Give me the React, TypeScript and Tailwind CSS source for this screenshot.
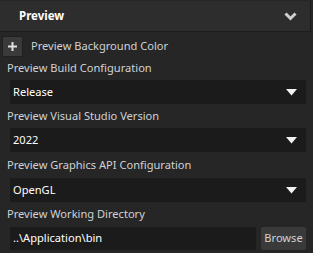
import React from "react";

const font = { fontFamily: '"Noto Sans", "Open Sans", sans-serif' };

function Tri() {
  return (
    <svg width="11" height="7" viewBox="0 0 11 7" className="shrink-0">
      <path d="M0 0 H11 L5.5 6.5 Z" fill="#f2f2f2" />
    </svg>
  );
}

function Select({ value }: { value: string }) {
  return (
    <div className="ml-[10px] mr-[7px] h-[24px] bg-[#1b1b1b] flex items-center justify-between pl-[3px] pr-[9px] text-[11.1px] text-white">
      <span>{value}</span>
      <Tri />
    </div>
  );
}

function Label({ text, h }: { text: string; h: string }) {
  return <div className={`pl-[7px] flex items-center text-[11.1px] text-[#cfd2d6] ${h}`}>{text}</div>;
}

export default function App() {
  return (
    <div className="w-[313px] h-[253px] bg-[#262626] overflow-hidden" style={font}>
      <div className="mt-[1px] mr-[2px] h-[31px] bg-[#2d2d2d] border-b border-r border-[#1c1c1c] flex items-center justify-between pl-[19px] pr-[13px]">
        <span className="text-[11.5px] font-bold text-white">Preview</span>
        <svg width="13" height="9" viewBox="0 0 13 9">
          <path d="M1.5 1.5 L6.5 6.5 L11.5 1.5" stroke="#cfcfcf" strokeWidth="3" fill="none" />
        </svg>
      </div>
      <div className="flex items-start h-[25px] pt-[4px] pl-[2px]">
        <div className="w-[21px] h-[21px] bg-[#3a3a3a] border border-[#202020] rounded-[2px] flex items-center justify-center">
          <svg width="9" height="9" viewBox="0 0 9 9">
            <path d="M4.5 0 V9 M0 4.5 H9" stroke="#e0e0e0" strokeWidth="2" />
          </svg>
        </div>
        <span className="ml-[8px] text-[11.1px] leading-[19px] text-[#cfd2d6]">Preview Background Color</span>
      </div>
      <Label text="Preview Build Configuration" h="h-[23px]" />
      <Select value="Release" />
      <Label text="Preview Visual Studio Version" h="h-[24px]" />
      <Select value="2022" />
      <Label text="Preview Graphics API Configuration" h="h-[26px]" />
      <Select value="OpenGL" />
      <Label text="Preview Working Directory" h="h-[25px]" />
      <div className="ml-[10px] mr-[7px] h-[23px] flex gap-[5px]">
        <div className="flex-1 bg-[#1b1b1b] flex items-center pl-[3px] text-[11.1px] text-white">..\Application\bin</div>
        <div className="w-[45px] bg-[#3a3a3a] rounded-[2px] flex items-center justify-center text-[11.1px] text-[#cfd2d6]">Browse</div>
      </div>
    </div>
  );
}
